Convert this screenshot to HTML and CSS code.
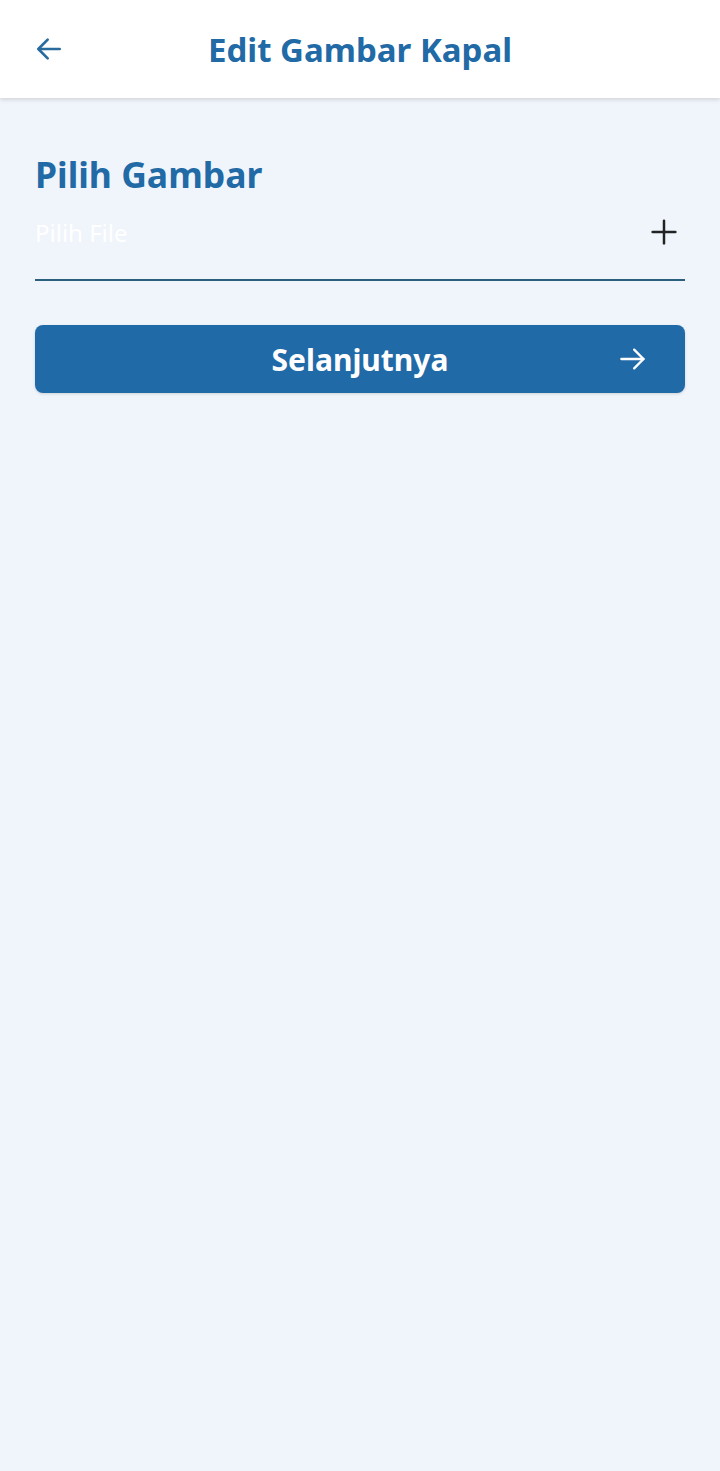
FILE: index.html
```html
<!DOCTYPE html>
<html lang="id">
<head>
    <meta charset="UTF-8">
    <meta name="viewport" content="width=device-width, initial-scale=1.0">
    <title>Edit Gambar Kapal</title>
    <link rel="stylesheet" href="styles.css">
</head>
<body>
    <header class="app-bar">
        <button class="back-button" aria-label="Kembali">
            <svg width="32" height="32" viewBox="0 0 24 24" fill="none" stroke="currentColor" stroke-width="2" stroke-linecap="round" stroke-linejoin="round">
                <path d="M20 12H4.5"/>
                <path d="M11 5l-7 7 7 7"/>
            </svg>
        </button>
        <h1 class="app-title">Edit Gambar Kapal</h1>
    </header>

    <main class="content">
        <h2 class="section-title">Pilih Gambar</h2>
        <label class="file-field">
            <span class="file-placeholder">Pilih File</span>
            <svg class="plus-icon" width="26" height="26" viewBox="0 0 24 24" fill="none" stroke="currentColor" stroke-width="2.3" stroke-linecap="round">
                <path d="M12 1.5v21"/>
                <path d="M1.5 12h21"/>
            </svg>
        </label>

        <button class="button" id="nextButton">
            <span>Selanjutnya</span>
            <svg class="button-arrow" width="28" height="28" viewBox="0 0 24 24" fill="none" stroke="currentColor" stroke-width="2" stroke-linecap="round" stroke-linejoin="round">
                <path d="M2 12h19"/>
                <path d="M13 4l8 8-8 8"/>
            </svg>
        </button>
    </main>
</body>
</html>
```

FILE: styles.css
```css
body {
    font-family: "Noto Sans", "Open Sans", sans-serif;
    margin: 0;
    padding: 0;
    min-height: 100vh;
    background-color: #f0f5fb;
}
.app-bar {
    height: 98px;
    background-color: #fff;
    box-shadow: 0 2px 4px rgba(0, 0, 0, 0.12);
    display: flex;
    align-items: center;
    justify-content: center;
    position: relative;
}
.back-button {
    position: absolute;
    left: 33px;
    top: 33px;
    padding: 0;
    border: none;
    background: none;
    color: #2a6b9e;
    display: flex;
}
.app-title {
    margin: 0;
    font-size: 33px;
    font-weight: 700;
    color: #216aa6;
}
.content {
    padding: 52px 35px 0;
}
.section-title {
    margin: 0;
    font-size: 35.5px;
    font-weight: 700;
    color: #216aa6;
    line-height: 48px;
}
.file-field {
    display: flex;
    align-items: center;
    justify-content: space-between;
    height: 81px;
    border-bottom: 2px solid #2a607e;
    padding-right: 8px;
}
.file-placeholder {
    font-size: 24px;
    color: #fff;
    margin-bottom: 13px;
}
.plus-icon {
    color: #222;
    margin-bottom: 13px;
}
.button {
    width: 100%;
    height: 68px;
    margin-top: 44px;
    border: none;
    border-radius: 8px;
    background-color: #216aa8;
    color: #fff;
    font-family: inherit;
    font-size: 30px;
    font-weight: 700;
    display: flex;
    align-items: center;
    justify-content: center;
    position: relative;
    box-shadow: 0 1px 3px rgba(0, 0, 0, 0.15);
}
.button-arrow {
    position: absolute;
    right: 38px;
}
```
